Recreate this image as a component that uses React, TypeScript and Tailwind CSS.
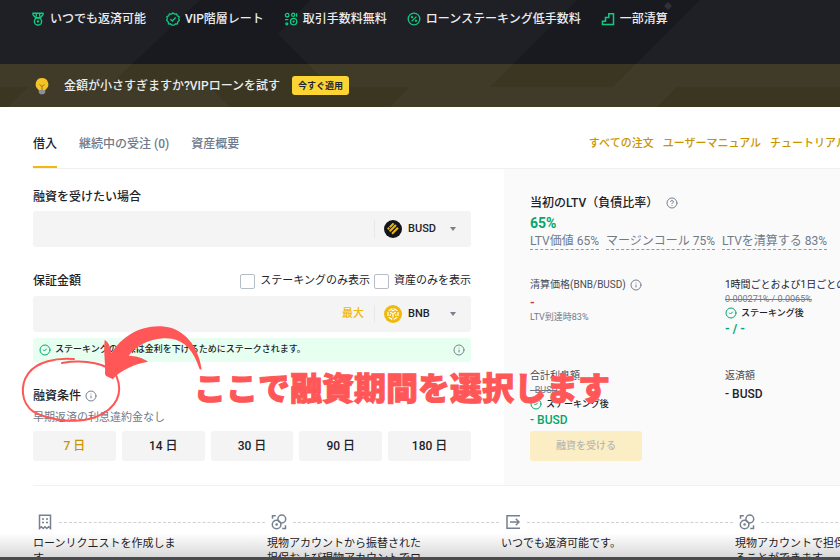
import React, { useState } from 'react';
import { CircleCheck, CircleHelp, Info } from 'lucide-react';

type IconProps = { className?: string };

function MedalIcon({ className }: IconProps) {
  return (
    <svg viewBox="0 0 14 14" fill="none" stroke="currentColor" strokeWidth="1.4" className={className}>
      <path d="M2 1.2h10v1.6L9.4 5.8H4.6L2 2.8zM5.3 1.2v3.6M8.7 1.2v3.6" />
      <circle cx="7" cy="9.4" r="3.6" />
      <circle cx="7" cy="9.4" r="0.5" fill="currentColor" />
    </svg>
  );
}

function SealIcon({ className }: IconProps) {
  return (
    <svg viewBox="0 0 14 14" fill="none" stroke="currentColor" strokeWidth="1.3" className={className}>
      <path d="M7 .9l1.6 1.2 2-.2.7 1.9 1.8.9-.4 2 .6 1.7-1.5 1.4-.3 2-2 .2-1.6 1.2h-1.8L4.5 12l-2-.2-.3-2L.7 8.4l.6-1.7-.4-2 1.8-.9.7-1.9 2 .2z" />
      <path d="M4.4 7.1l1.9 1.9 3.4-3.5" />
    </svg>
  );
}

function FeeIcon({ className }: IconProps) {
  return (
    <svg viewBox="0 0 14 14" fill="none" stroke="currentColor" strokeWidth="1.3" className={className}>
      <circle cx="3.2" cy="3.2" r="1.8" />
      <circle cx="9.2" cy="2.8" r="1.6" />
      <circle cx="9.6" cy="9.6" r="3.2" />
      <circle cx="9.6" cy="9.6" r="0.5" fill="currentColor" />
      <circle cx="2.8" cy="11.8" r="1" />
      <path d="M1 7.6h3.4M12.6 1.2v3.5" />
    </svg>
  );
}

function PercentIcon({ className }: IconProps) {
  return (
    <svg viewBox="0 0 14 14" fill="none" stroke="currentColor" strokeWidth="1.3" className={className}>
      <circle cx="7" cy="7" r="5.8" />
      <path d="M4.6 9.4l4.8-4.8" />
      <circle cx="5" cy="5.2" r="0.5" fill="currentColor" />
      <circle cx="9" cy="8.8" r="0.5" fill="currentColor" />
    </svg>
  );
}

function StairsIcon({ className }: IconProps) {
  return (
    <svg viewBox="0 0 14 14" fill="none" stroke="currentColor" strokeWidth="1.5" className={className}>
      <path d="M1.5 12.5V9.3h3V5.5h3.3V1.8h4.7v10.7z" />
    </svg>
  );
}

function BulbIcon({ className }: IconProps) {
  return (
    <svg viewBox="0 0 16 18" className={className}>
      <path d="M8 1a6.3 6.3 0 0 0-4 11.2l1 1.3h6l1-1.3A6.3 6.3 0 0 0 8 1z" fill="#f5c325" />
      <path d="M5.5 7.5L8 9.5l2.5-2M8 9.5v4" fill="none" stroke="#8a6d1a" strokeWidth="0.9" />
      <path d="M4.8 13h6.4v2.4l-1.4 1.8H6.2l-1.4-1.8z" fill="#8b8f98" />
    </svg>
  );
}

function BusdLogo() {
  return (
    <svg viewBox="0 0 18 18" className="size-[18px] shrink-0">
      <circle cx="9" cy="9" r="9" fill="#14151a" />
      <g stroke="#f0b90b" strokeWidth="2">
        <path d="M3.8 9.2l1.4-1.4M5.8 7.2l3.8-3.8M5.6 11.4l6.4-6.4M8 13.8l6-6" />
      </g>
    </svg>
  );
}

function BnbLogo() {
  return (
    <svg viewBox="0 0 18 18" className="size-[18px] shrink-0">
      <circle cx="9" cy="9" r="9" fill="#f0b90b" />
      <g fill="none" stroke="#fff" strokeWidth="1.2">
        <path d="M9 3.2l5 2.9v5.8l-5 2.9-5-2.9V6.1z" strokeDasharray="4.2 1.6" strokeDashoffset="-0.8" />
        <path d="M6.200 7.200L9 8.800l2.800-1.600M9 8.800v3.600M6.200 9.300v1.800M11.800 9.300v1.800M7.600 6L9 5.200 10.400 6" />
      </g>
    </svg>
  );
}

function ReceiptIcon() {
  return (
    <svg viewBox="0 0 16 16" fill="none" stroke="currentColor" strokeWidth="1.5" className="size-4">
      <path d="M2.5 1.2h11v13.3l-1.9-1.7-1.8 1.7L8 12.8l-1.8 1.7-1.8-1.7-1.9 1.7z" />
      <path d="M5 5h2M9 5h2M5 8.5h2M9 8.5h2" />
    </svg>
  );
}

function CoinsIcon() {
  return (
    <svg viewBox="0 0 16 16" fill="none" stroke="currentColor" strokeWidth="1.5" className="size-4">
      <circle cx="10.8" cy="5" r="3.9" />
      <circle cx="5.6" cy="10.5" r="4.3" />
      <circle cx="5.6" cy="10.5" r="0.6" fill="currentColor" />
      <path d="M1.5 4.8V1.8h3.3M14.5 11.2v3.3h-3.3" />
    </svg>
  );
}

function ExitIcon() {
  return (
    <svg viewBox="0 0 16 16" fill="none" stroke="currentColor" strokeWidth="1.5" className="size-4">
      <path d="M15 1.8H2v12.4h13M5 8h9M10.8 4.8L14 8l-3.2 3.2" />
    </svg>
  );
}

const features = [
  { label: 'いつでも返済可能', Icon: MedalIcon },
  { label: 'VIP階層レート', Icon: SealIcon },
  { label: '取引手数料無料', Icon: FeeIcon },
  { label: 'ローンステーキング低手数料', Icon: PercentIcon },
  { label: '一部清算', Icon: StairsIcon },
];

const tabs = ['借入', '継続中の受注 (0)', '資産概要'];
const links = ['すべての注文', 'ユーザーマニュアル', 'チュートリアル'];
const terms = [7, 14, 30, 90, 180];

const steps = [
  { text: 'ローンリクエストを作成しま\nす。', Icon: ReceiptIcon },
  { text: '現物アカウントから振替された\n担保および現物アカウントでロ', Icon: CoinsIcon },
  { text: 'いつでも返済可能です。', Icon: ExitIcon },
  { text: '現物アカウントで担保を受け取\nることができます。', Icon: CoinsIcon },
];

function Hero() {
  return (
    <header className="relative bg-[#1f2026] text-[#eaecef]">
      <svg
        viewBox="0 0 840 107"
        preserveAspectRatio="none"
        className="absolute inset-0 h-full w-full"
        fill="#191a1f">
        <path d="M200 0h110l-32 34 53 53h79l-20 20H230l-20-20H108z" />
        <path d="M577 0h123l-87 87H490z" />
        <path d="M677 87h163v20H657z" />
        <path d="M0 87h28l-20 20H0z" />
        <path d="M668 2l4 4-4 4-4-4z" fill="#303137" />
      </svg>
      <ul className="relative flex h-16 gap-5 overflow-hidden pt-[9px] pl-[31px] text-xs leading-5 font-medium whitespace-nowrap">
        {features.map(({ label, Icon }) => (
          <li key={label} className="flex h-5 items-center gap-[5px]">
            <Icon className="size-3.5 shrink-0 text-[#0ecb81]" />
            {label}
          </li>
        ))}
      </ul>
      <div className="relative flex h-[43px] items-center bg-[#fcd535]/15 pl-[34px] text-xs font-medium whitespace-nowrap">
        <BulbIcon className="mr-3.5 h-[18px] w-4" />
        <span>金額が小さすぎますか?VIPローンを試す</span>
        <button
          type="button"
          className="ml-3 h-[19px] rounded-[3px] bg-[#fcd535] px-1.5 text-[9px] font-bold text-[#202630]">
          今すぐ適用
        </button>
      </div>
    </header>
  );
}

function CoinField({
  id,
  coin,
  logo,
  max,
}: {
  id: string;
  coin: string;
  logo: React.ReactNode;
  max?: boolean;
}) {
  return (
    <div className="flex h-9 items-center rounded-[3px] bg-[#f4f4f4]">
      <input id={id} type="text" className="h-full min-w-0 flex-1 bg-transparent px-3 text-xs outline-none" />
      {max && (
        <button type="button" className="mr-2.5 text-[11px] font-medium text-[#f0b90b]">
          最大
        </button>
      )}
      <div className="flex h-[18px] items-center border-l border-[#e6e8ea] pl-[9px]">
        {logo}
        <div className="relative ml-1.5 flex w-[63px] items-center">
          <select
            aria-label={coin}
            defaultValue={coin}
            className="h-4 w-full appearance-none bg-transparent text-[11px] leading-4 font-medium text-[#1e2329] outline-none">
            <option>{coin}</option>
          </select>
          <svg viewBox="0 0 6 4" className="pointer-events-none absolute right-[15px] h-1 w-1.5">
            <path d="M0 0h6L3 4z" fill="#76808f" />
          </svg>
        </div>
      </div>
    </div>
  );
}

function Check({ label }: { label: string }) {
  return (
    <label className="flex items-center gap-[5px] text-[11px] leading-4 whitespace-nowrap">
      <input type="checkbox" className="size-[15px] appearance-none rounded-[2px] border border-[#b7bdc6] bg-white" />
      {label}
    </label>
  );
}

function BorrowForm() {
  const [term, setTerm] = useState(7);

  return (
    <section className="w-3/5 pt-[18px] pr-[33px] pb-6 pl-[33px]">
      <label htmlFor="borrow" className="block text-xs leading-5 font-medium">
        融資を受けたい場合
      </label>
      <div className="mt-1">
        <CoinField id="borrow" coin="BUSD" logo={<BusdLogo />} />
      </div>

      <div className="mt-6 flex h-5 items-center justify-between">
        <label htmlFor="collateral" className="text-xs leading-5 font-medium">
          保証金額
        </label>
        <div className="flex gap-1">
          <Check label="ステーキングのみ表示" />
          <Check label="資産のみを表示" />
        </div>
      </div>
      <div className="mt-[5px]">
        <CoinField id="collateral" coin="BNB" logo={<BnbLogo />} max />
      </div>

      <div className="mt-1.5 flex h-6 items-center rounded-[3px] bg-[#e6fff1] px-1.5 text-[9px] font-medium">
        <CircleCheck className="mr-1 size-3 text-[#03a66d]" />
        ステーキングの担保は金利を下げるためにステークされます。
        <Info className="ml-auto size-3 text-[#76808f]" />
      </div>

      <h2 className="mt-6 flex items-center gap-1 text-xs leading-5 font-medium">
        融資条件
        <Info className="size-3 text-[#76808f]" />
      </h2>
      <p className="mt-1 text-[11px] leading-4 text-[#707a8a]">早期返済の利息違約金なし</p>
      <div className="mt-[5px] grid grid-cols-5 gap-1.5">
        {terms.map((days) => (
          <button
            key={days}
            type="button"
            onClick={() => setTerm(days)}
            className={`h-[30px] rounded-[3px] bg-[#f4f4f4] text-xs font-medium ${
              term === days ? 'text-[#c99400]' : 'text-[#1e2329]'
            }`}>
            {days} 日
          </button>
        ))}
      </div>
    </section>
  );
}

function Staked() {
  return (
    <p className="flex items-center gap-1 text-[9px] leading-4 font-medium">
      <CircleCheck className="size-3 text-[#03a66d]" />
      ステーキング後
    </p>
  );
}

function Summary() {
  return (
    <section className="w-2/5 overflow-hidden bg-[#fafafa] pt-6 pl-[26px] whitespace-nowrap">
      <h2 className="flex items-center text-xs leading-5 font-medium">
        当初のLTV（負債比率）
        <CircleHelp className="ml-2 size-3 text-[#76808f]" />
      </h2>
      <p className="text-sm leading-5 font-bold text-[#03a66d]">65%</p>
      <div className="flex gap-[7px] text-xs leading-4 text-[#707a8a]">
        <span className="border-b border-dashed border-[#929aa5]">LTV価値 65%</span>
        <span className="border-b border-dashed border-[#929aa5]">マージンコール 75%</span>
        <span className="border-b border-dashed border-[#929aa5]">LTVを清算する 83%</span>
      </div>

      <div className="mt-[27px] grid grid-cols-[195px_1fr] text-[10px] leading-4 text-[#474d57]">
        <div className="h-[91px]">
          <p className="flex items-center gap-1">
            清算価格(BNB/BUSD)
            <Info className="size-3 text-[#76808f]" />
          </p>
          <p className="mt-0.5 text-xs leading-4 font-bold text-[#cf304a]">-</p>
          <p className="text-[9px] leading-3 text-[#707a8a]">LTV到達時83%</p>
        </div>
        <div className="h-[91px] text-[#1e2329]">
          <p>1時間ごとおよび1日ごとの金利</p>
          <p className="text-[9px] leading-3 text-[#707a8a] line-through">0.000271% / 0.0065%</p>
          <Staked />
          <p className="text-xs leading-4 font-bold text-[#03a66d]">- / -</p>
        </div>
        <div>
          <p>合計利息額</p>
          <p className="text-[9px] leading-3 text-[#707a8a] line-through">- BUSD</p>
          <div className="text-[#1e2329]">
            <Staked />
          </div>
          <p className="text-xs leading-4 font-medium text-[#03a66d]">- BUSD</p>
          <button
            type="button"
            disabled
            className="mt-[3px] h-[30px] w-28 rounded-[3px] bg-[#fbeec4] text-[10px] font-medium text-[#b7b8b4]">
            融資を受ける
          </button>
        </div>
        <div>
          <p>返済額</p>
          <p className="mt-0.5 text-xs leading-4 font-medium text-[#1e2329]">- BUSD</p>
        </div>
      </div>
    </section>
  );
}

function Callout() {
  return (
    <div className="pointer-events-none absolute top-[310px] left-0 text-[#ff5757]">
      <svg viewBox="0 0 621 351" className="h-[117px] w-[207px]" fill="none">
        <path
          d="M186 159C250 148 330 158 350 200C370 250 350 295 290 320C235 342 150 333 100 305C62 278 60 225 85 190C110 155 170 142 222 147"
          stroke="currentColor"
          strokeWidth="6"
          strokeLinecap="round"
        />
        <path
          d="M605 179C600 135 575 75 515 54C440 35 370 72 334 130C332 112 325 95 314 90C310 125 317 165 315 190C315 200 325 200 338 208C358 182 408 160 444 155C428 143 405 137 386 137C405 112 440 88 490 85C550 82 580 120 599 178Z"
          fill="currentColor"
        />
      </svg>
      <p className="absolute top-[59px] left-[194px] text-[32px] leading-10 font-black whitespace-nowrap [-webkit-text-stroke:1px_#ff5757]">
        ここで融資期間を選択します
      </p>
    </div>
  );
}

function Steps() {
  return (
    <ol className="ml-[33px] flex border-t border-[#f0f1f2] pt-7">
      {steps.map(({ text, Icon }, i) => (
        <li key={i} className="w-[29%] shrink-0">
          <div className="flex items-center gap-1.5 pl-1 text-[#76808f]">
            <Icon />
            <span className="mr-0.5 flex-1 border-t border-dashed border-[#cdd2d9]" />
          </div>
          <p className="mt-1.5 text-[11px] leading-[15px] whitespace-pre">{text}</p>
        </li>
      ))}
    </ol>
  );
}

export default function App() {
  return (
    <div
      lang="ja"
      className="relative h-screen overflow-hidden bg-white font-[Roboto,'Noto_Sans_CJK_JP',sans-serif] text-[#1e2329]">
      <Hero />
      <div className="ml-[33px] flex h-[62px] justify-between border-b border-[#eff0f2] whitespace-nowrap">
        <nav className="flex gap-[22px] text-xs font-medium">
          {tabs.map((tab, i) => (
            <button
              key={tab}
              type="button"
              className={
                i === 0
                  ? 'border-b-2 border-[#f0b90b] pt-3.5'
                  : 'border-b-2 border-transparent pt-3.5 text-[#707a8a]'
              }>
              {tab}
            </button>
          ))}
        </nav>
        <nav className="-mr-[7px] flex items-center gap-[9px] pt-3.5 text-[11px] font-medium text-[#c99400]">
          {links.map((link) => (
            <a key={link} href="#">
              {link}
            </a>
          ))}
        </nav>
      </div>
      <main className="flex">
        <BorrowForm />
        <Summary />
      </main>
      <Steps />
      <Callout />
      <div className="pointer-events-none absolute inset-x-0 bottom-0">
        <div className="h-6 bg-linear-to-b from-black/0 to-black/15" />
        <div className="h-[3px] bg-[#4b4b4d]" />
      </div>
    </div>
  );
}
